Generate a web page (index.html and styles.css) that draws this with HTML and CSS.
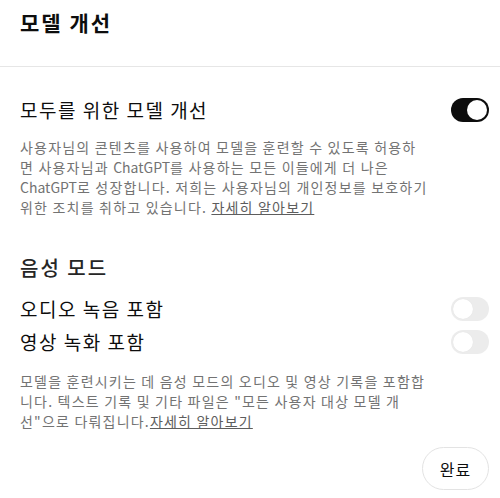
FILE: index.html
```html
<html>
<head>
<meta charset="utf-8">
<meta name="viewport" content="width=device-width, initial-scale=1">
<link rel="stylesheet" href="styles.css">
</head>
<body>
	<div class="dialog">
		<div class="dialog-head">
			<h2 class="dialog-title">모델 개선</h2>
		</div>
		<div class="dialog-body">
			<div class="row row-main">
				<span class="row-label">모두를 위한 모델 개선</span>
				<span class="switch on"><span class="knob"></span></span>
			</div>
			<p class="note">사용자님의 콘텐츠를 사용하여 모델을 훈련할 수 있도록 허용하<br>면 사용자님과 <span class="latin">ChatGPT</span>를 사용하는 모든 이들에게 더 나은<br><span class="latin">ChatGPT</span>로 성장합니다. 저희는 사용자님의 개인정보를 보호하기<br>위한 조치를 취하고 있습니다. <a href="#">자세히 알아보기</a></p>

			<h3 class="section-title">음성 모드</h3>
			<div class="row">
				<span class="row-label">오디오 녹음 포함</span>
				<span class="switch off"><span class="knob"></span></span>
			</div>
			<div class="row row-next">
				<span class="row-label">영상 녹화 포함</span>
				<span class="switch off"><span class="knob"></span></span>
			</div>
			<p class="note note-voice">모델을 훈련시키는 데 음성 모드의 오디오 및 영상 기록을 포함합<br>니다. 텍스트 기록 및 기타 파일은 "모든 사용자 대상 모델 개<br>선"으로 다뤄집니다.<a href="#">자세히 알아보기</a></p>

			<div class="actions">
				<button class="btn-done">완료</button>
			</div>
		</div>
	</div>
</body>
</html>
```

FILE: styles.css
```css
body {
	margin: 0;
	background: #fff;
	color: #0d0d0d;
	font-family: "Noto Sans CJK KR", "Noto Sans", sans-serif;
}

.dialog {
	width: 500px;
}

.dialog-head {
	padding: 9px 20px 31px;
	border-bottom: 1px solid #e6e6e6;
}

.dialog-title {
	margin: 0;
	font-size: 21px;
	font-weight: 700;
	line-height: 26px;
	letter-spacing: 2px;
}

.dialog-body {
	padding: 0 11px 0 20px;
}

.row {
	display: flex;
	align-items: center;
	justify-content: space-between;
	height: 24px;
}

.row-main {
	margin-top: 31px;
}

.row-next {
	margin-top: 9px;
}

.row-label {
	font-size: 19px;
	line-height: 24px;
	letter-spacing: 1.5px;
}

.switch {
	position: relative;
	width: 38px;
	height: 24px;
	border-radius: 12px;
	flex-shrink: 0;
}
.switch .knob {
	position: absolute;
	top: 2px;
	width: 20px;
	height: 20px;
	border-radius: 50%;
	background: #fff;
}
.switch.on {
	background: #0d0d0d;
}
.switch.on .knob {
	right: 2px;
}
.switch.off {
	background: #ececec;
}
.switch.off .knob {
	left: 2px;
	box-shadow: 0 0 1px rgba(0,0,0,0.08);
}

/* lines are broken by hand, keep them from re-wrapping */
.note {
	margin: 15px 0 0;
	font-size: 14px;
	line-height: 20px;
	letter-spacing: 1.2px;
	white-space: nowrap;
	color: #737373;
}
.note .latin {
	letter-spacing: 0;
}
.note a {
	color: #5d5d5d;
	text-decoration: underline;
}

.note-voice {
	margin-top: 17px;
}

.section-title {
	margin: 38px 0 16px;
	font-size: 20px;
	font-weight: 500;
	line-height: 26px;
	letter-spacing: 2px;
	color: #262626;
}

.actions {
	display: flex;
	justify-content: flex-end;
	margin-top: 16px;
}

.btn-done {
	width: 67px;
	height: 43px;
	border: 1px solid #e3e3e3;
	border-radius: 22px;
	background: #fff;
	color: #0d0d0d;
	font-family: inherit;
	font-size: 16px;
	letter-spacing: 1px;
}
```
